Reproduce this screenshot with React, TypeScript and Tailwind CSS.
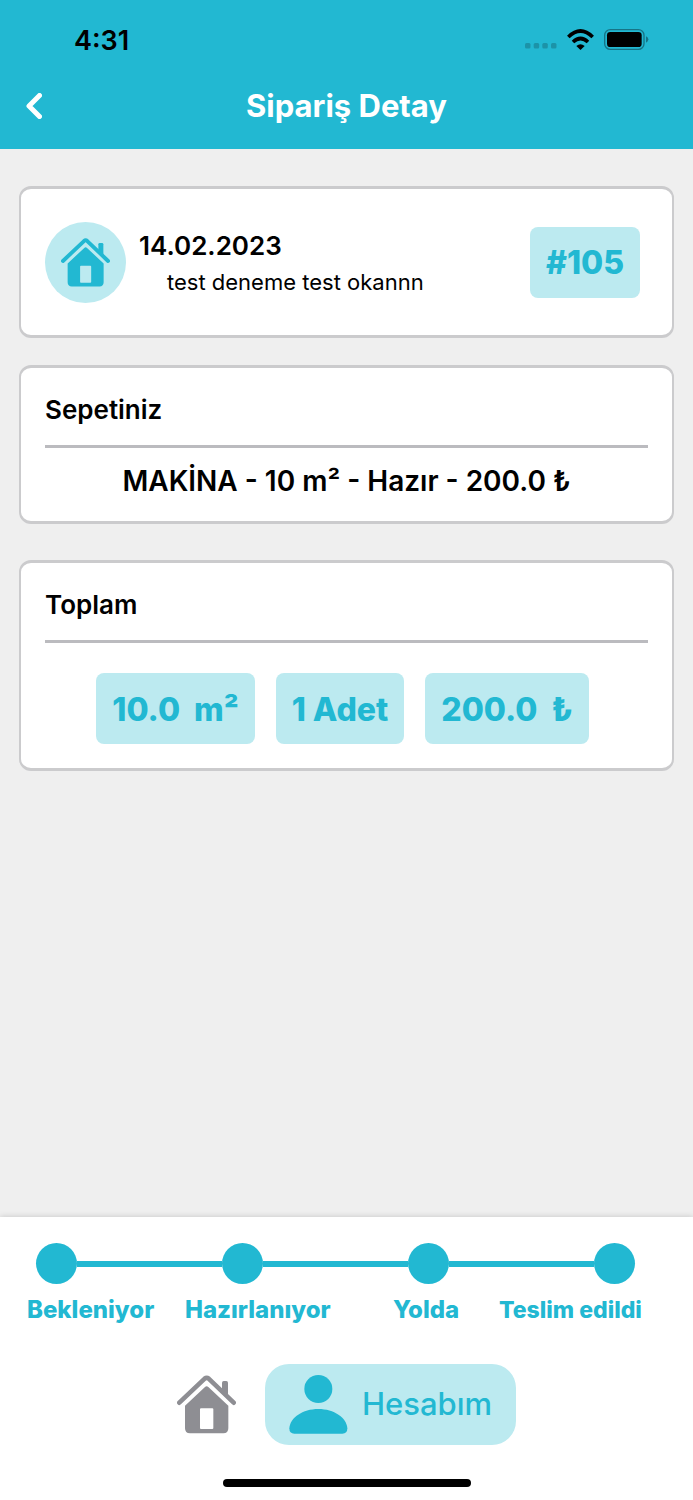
import { ReactNode } from "react";

const totals = ["10.0\u00a0 m²", "1 Adet", "200.0\u00a0 ₺"];
const steps = ["Bekleniyor", "Hazırlanıyor", "Yolda", "Teslim edildi"];

function HouseIcon({ className }: { className: string }) {
  return (
    <svg viewBox="0 0 177 177" className={className} aria-hidden="true">
      <path
        d="M7 83 L83 11 Q89 6 95 11 L170 83"
        fill="none"
        stroke="currentColor"
        strokeWidth="14"
        strokeLinecap="round"
        strokeLinejoin="round"
      />
      <path d="M135 50 V23 Q135 18 140 18 H148 Q153 18 153 23 V68 Z" fill="currentColor" />
      <path
        fillRule="evenodd"
        fill="currentColor"
        d="M84 36 Q89 31 94 36 L154 92 V160 Q154 175 139 175 H39 Q24 175 24 160 V92 Z M72 100 Q69 100 69 103 V159 Q69 162 72 162 H106 Q109 162 109 159 V103 Q109 100 106 100 Z"
      />
    </svg>
  );
}

function PersonIcon({ className }: { className: string }) {
  return (
    <svg viewBox="0 0 175 177" className={className} fill="currentColor" aria-hidden="true">
      <circle cx="87" cy="42" r="42" />
      <path d="M0 160 C2 128 40 102 87 102 S172 128 174 160 Q174 176 159 176 H15 Q0 176 0 160 Z" />
    </svg>
  );
}

function StatusBar() {
  return (
    <div className="flex h-[78px] items-center justify-between pl-[74px] pr-11 text-black">
      <span className="pt-1 text-[27px] font-semibold leading-8">4:31</span>
      <div className="flex items-center gap-2.5">
        <svg viewBox="0 0 32 22" className="h-[22px] w-8" aria-hidden="true">
          <g fill="#1c93a8">
            <rect x="0" y="15" width="5.500" height="5.500" rx="1.500" />
            <rect x="8.700" y="15" width="5.500" height="5.500" rx="1.500" />
            <rect x="17.300" y="15" width="5.500" height="5.500" rx="1.500" />
            <rect x="26" y="15" width="5.500" height="5.500" rx="1.500" />
          </g>
        </svg>
        <svg viewBox="0 0 81 63" className="h-[21px] w-[27px]" aria-hidden="true">
          <g fill="none" stroke="currentColor" strokeWidth="11">
            <path d="M4 24 Q40.500 -12 77 24" />
            <path d="M18 39 Q40.500 18 63 39" />
          </g>
          <path d="M40.500 63 L28 51 Q40.500 40 53 51 Z" fill="currentColor" />
        </svg>
        <svg viewBox="0 0 135 63" className="h-[21px] w-[45px]" aria-hidden="true">
          <rect x="2" y="2" width="118" height="59" rx="17" fill="none" stroke="#167486" strokeWidth="4" />
          <rect x="9" y="9" width="104" height="45" rx="10" fill="currentColor" />
          <path d="M126 22 Q133 25 133 31 Q133 38 126 41 Z" fill="#167486" />
        </svg>
      </div>
    </div>
  );
}

function Card({ children, className = "" }: { children: ReactNode; className?: string }) {
  return (
    <section className={`rounded-xl border-x-2 border-y-3 border-[#cbcbcd] bg-white px-6 ${className}`}>
      {children}
    </section>
  );
}

function Badge({ children }: { children: ReactNode }) {
  return (
    <span className="flex h-[71px] items-center whitespace-nowrap rounded-lg bg-[#bceaf0] px-4 pt-0.5 text-[32px] font-extrabold text-[#22b8d2]">
      {children}
    </span>
  );
}

export default function App() {
  return (
    <div className="flex min-h-screen flex-col bg-[#efefef] font-['Inter','Liberation_Sans',sans-serif] text-black">
      {/* Header */}
      <header className="bg-[#22b8d2]">
        <StatusBar />
        <div className="grid h-[71px] grid-cols-[1fr_auto_1fr] items-start px-[26px] pt-2 text-white">
          <button aria-label="Geri" className="flex h-10 w-6 cursor-pointer items-center">
            <svg viewBox="0 0 16 26" className="h-[26px] w-4" aria-hidden="true">
              <path
                d="M13.500 2.500 L3 13 L13.500 23.500"
                fill="none"
                stroke="currentColor"
                strokeWidth="5"
                strokeLinecap="round"
                strokeLinejoin="round"
              />
            </svg>
          </button>
          <h1 className="text-[31px] font-bold leading-10">Sipariş Detay</h1>
        </div>
      </header>

      <main className="flex flex-1 flex-col px-[19px] pt-[37px]">
        {/* Order */}
        <Card className="flex h-[152px] items-center">
          <div className="flex size-[81px] shrink-0 items-center justify-center rounded-full bg-[#bceaf0] text-[#22b8d2]">
            <HouseIcon className="size-[49px]" />
          </div>
          <div className="ml-[13px] flex-1 pt-1">
            <p className="text-[26px] font-semibold leading-9">14.02.2023</p>
            <p className="pl-7 text-[22px] leading-9">test deneme test okannn</p>
          </div>
          <div className="mr-2">
            <Badge>#105</Badge>
          </div>
        </Card>

        {/* Basket */}
        <Card className="mt-[27px] pb-[22px] pt-6">
          <h2 className="text-[26px] font-semibold leading-9">Sepetiniz</h2>
          <hr className="mt-[17px] border-t-3 border-[#bbbbbf]" />
          <p className="mt-[15px] text-center text-[28px] font-semibold leading-9">MAKİNA - 10 m² - Hazır - 200.0 ₺</p>
        </Card>

        {/* Total */}
        <Card className="mt-9 pb-6 pt-6">
          <h2 className="text-[26px] font-semibold leading-9">Toplam</h2>
          <hr className="mt-[17px] border-t-3 border-[#bbbbbf]" />
          <div className="mt-[30px] flex justify-center gap-[21px] pr-2">
            {totals.map((t) => (
              <Badge key={t}>{t}</Badge>
            ))}
          </div>
        </Card>
      </main>

      <footer className="bg-white pt-[26px] shadow-[0_0_6px_rgba(0,0,0,0.18)]">
        {/* Order progress */}
        <div className="flex items-center pl-9 pr-[58px]">
          {steps.map((s, i) => (
            <div key={s} className={i > 0 ? "flex flex-1 items-center" : "flex items-center"}>
              {i > 0 && <span className="h-1.5 flex-1 bg-[#22b8d2]" />}
              <span className="size-[41px] rounded-full bg-[#22b8d2]" />
            </div>
          ))}
        </div>
        <ol className="mt-2.5 grid grid-cols-[158fr_208fr_106fr_194fr] whitespace-nowrap pl-[27px] text-2xl font-extrabold leading-8 text-[#22b8d2]">
          {steps.map((s) => (
            <li key={s} className="last:text-[23px] last:leading-8">
              {s}
            </li>
          ))}
        </ol>

        {/* Tabs */}
        <nav className="mt-[38px] flex items-center justify-center gap-[29px]">
          <button aria-label="Ana sayfa" className="cursor-pointer text-[#8e8e93]">
            <HouseIcon className="size-[59px]" />
          </button>
          <button className="flex h-[81px] cursor-pointer items-center gap-3.5 rounded-3xl bg-[#bceaf0] px-6 text-[31px] font-medium text-[#22b8d2]">
            <PersonIcon className="size-[59px]" />
            Hesabım
          </button>
        </nav>
        <div className="mx-auto mb-[13px] mt-[34px] h-2 w-[248px] rounded-full bg-black" />
      </footer>
    </div>
  );
}
